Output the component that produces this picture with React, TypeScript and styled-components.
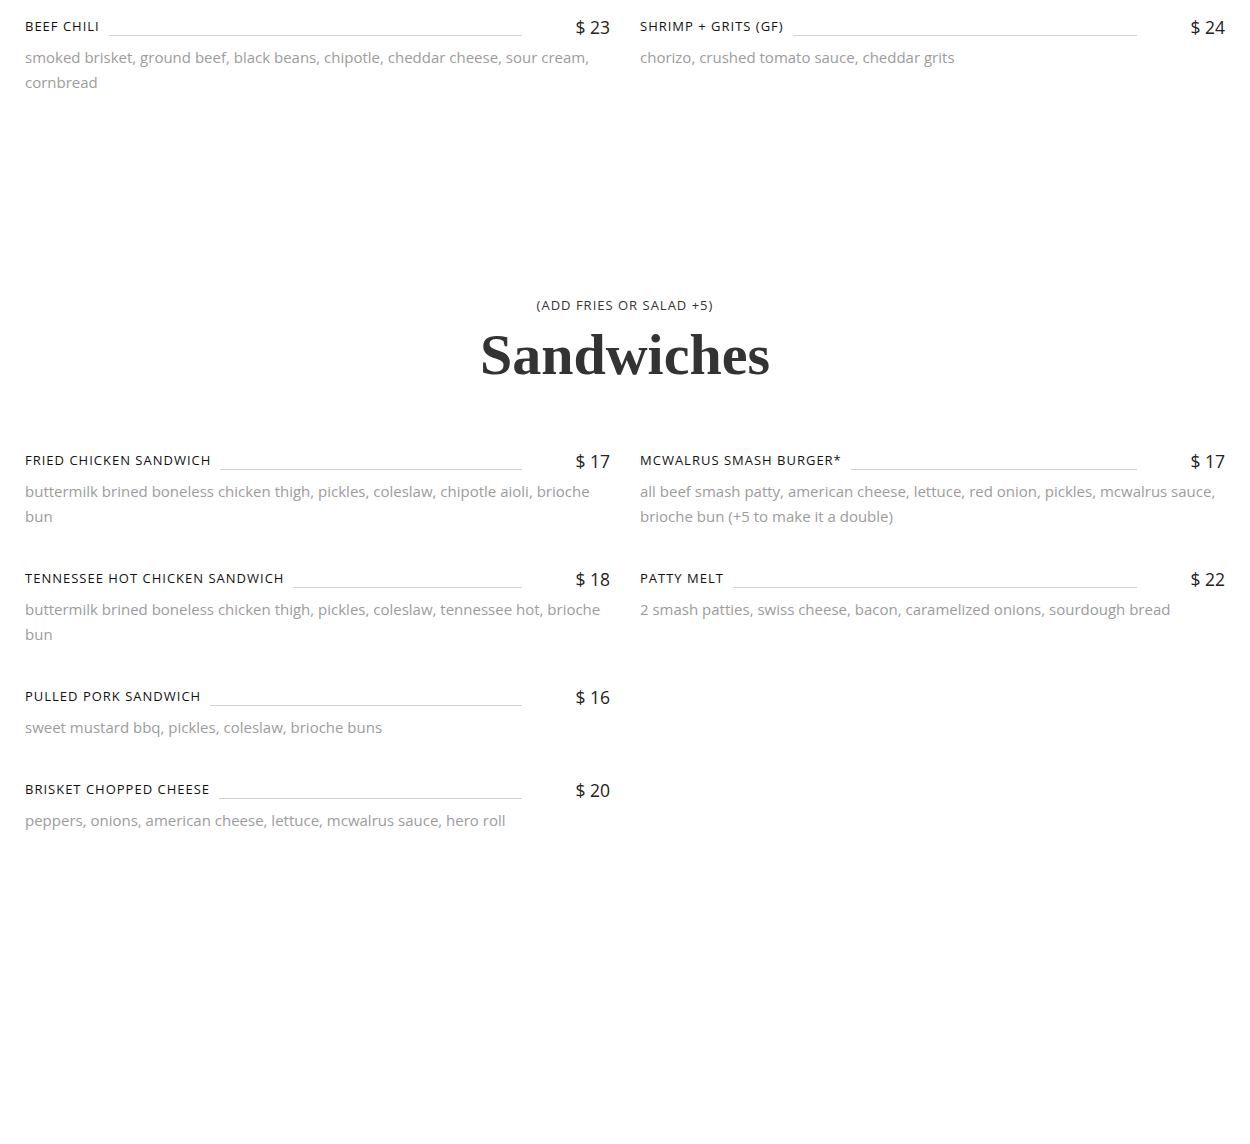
import styled, { createGlobalStyle } from 'styled-components';

type Item = { name: string; price: number; desc: string };

const starters: Item[][] = [
  [
    {
      name: 'Beef Chili',
      price: 23,
      desc: 'smoked brisket, ground beef, black beans, chipotle, cheddar cheese, sour cream, cornbread',
    },
  ],
  [
    {
      name: 'Shrimp + Grits (GF)',
      price: 24,
      desc: 'chorizo, crushed tomato sauce, cheddar grits',
    },
  ],
];

const sandwiches: Item[][] = [
  [
    {
      name: 'Fried Chicken Sandwich',
      price: 17,
      desc: 'buttermilk brined boneless chicken thigh, pickles, coleslaw, chipotle aioli, brioche bun',
    },
    {
      name: 'Tennessee Hot Chicken Sandwich',
      price: 18,
      desc: 'buttermilk brined boneless chicken thigh, pickles, coleslaw, tennessee hot, brioche bun',
    },
    {
      name: 'Pulled Pork Sandwich',
      price: 16,
      desc: 'sweet mustard bbq, pickles, coleslaw, brioche buns',
    },
    {
      name: 'Brisket Chopped Cheese',
      price: 20,
      desc: 'peppers, onions, american cheese, lettuce, mcwalrus sauce, hero roll',
    },
  ],
  [
    {
      name: 'McWalrus Smash Burger*',
      price: 17,
      desc: 'all beef smash patty, american cheese, lettuce, red onion, pickles, mcwalrus sauce, brioche bun (+5 to make it a double)',
    },
    {
      name: 'Patty Melt',
      price: 22,
      desc: '2 smash patties, swiss cheese, bacon, caramelized onions, sourdough bread',
    },
  ],
];

export default function App() {
  return (
    <>
      <GlobalStyle />
      <Page>
        <MenuGrid>
          {starters.map((col, i) => (
            <MenuColumn key={i}>
              {col.map((item) => (
                <MenuItem key={item.name} item={item} />
              ))}
            </MenuColumn>
          ))}
        </MenuGrid>

        <SectionHeader>
          <SectionNote>(Add fries or salad +5)</SectionNote>
          <SectionTitle>Sandwiches</SectionTitle>
        </SectionHeader>

        <MenuGrid>
          {sandwiches.map((col, i) => (
            <MenuColumn key={i}>
              {col.map((item) => (
                <MenuItem key={item.name} item={item} />
              ))}
            </MenuColumn>
          ))}
        </MenuGrid>
      </Page>
    </>
  );
}

function MenuItem({ item }: { item: Item }) {
  return (
    <StyledItem>
      <ItemHead>
        <ItemName>{item.name}</ItemName>
        <Leader />
        <Price>$ {item.price}</Price>
      </ItemHead>
      <ItemDesc>{item.desc}</ItemDesc>
    </StyledItem>
  );
}

const GlobalStyle = createGlobalStyle`
  html, body {
    margin: 0;
    padding: 0;
    background: #fff;
  }
  body {
    font-family: 'Open Sans', 'Liberation Sans', sans-serif;
  }
`;

const Page = styled.div`
  width: 1250px;
  min-height: 1144px;
  padding: 12px 25px 0;
  box-sizing: border-box;
`;

const MenuGrid = styled.div`
  display: grid;
  grid-template-columns: 1fr 1fr;
  column-gap: 30px;
`;

const MenuColumn = styled.div`
  display: flex;
  flex-direction: column;
`;

const StyledItem = styled.div`
  margin-bottom: 35px;
`;

const ItemHead = styled.div`
  display: flex;
  align-items: center;
  height: 30px;
`;

const ItemName = styled.span`
  font-size: 13px;
  letter-spacing: 1px;
  text-transform: uppercase;
  color: #111;
  white-space: nowrap;
  margin-top: -2px;
`;

const Leader = styled.div`
  flex: 1;
  height: 1px;
  background: #d2d2d2;
  margin: 16px 0 0 9px;
`;

const Price = styled.span`
  width: 88px;
  text-align: right;
  font-size: 17.5px;
  color: #222;
`;

const ItemDesc = styled.p`
  margin: 3px 0 0;
  font-size: 15px;
  line-height: 25px;
  color: #9c9c9c;
  padding-right: 6px;
`;

const SectionHeader = styled.div`
  display: flex;
  flex-direction: column;
  align-items: center;
  padding-top: 165px;
  padding-bottom: 56px;
`;

const SectionNote = styled.div`
  font-size: 13px;
  letter-spacing: 1px;
  text-transform: uppercase;
  color: #333;
  line-height: 20px;
`;

const SectionTitle = styled.h2`
  margin: 5px 0 0;
  font-family: 'Liberation Serif', 'DejaVu Serif', serif;
  font-weight: 700;
  font-size: 58px;
  line-height: 70px;
  color: #333;
`;
